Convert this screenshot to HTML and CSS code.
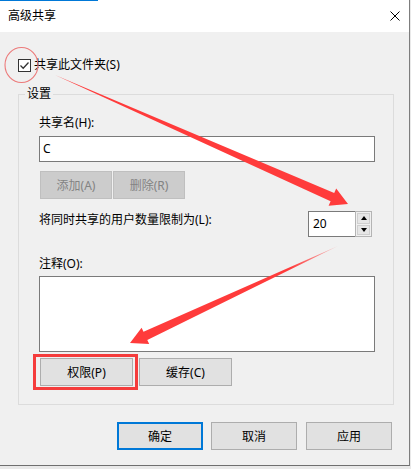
FILE: index.html
```html
<!DOCTYPE html>
<html lang="zh-CN">
<head>
    <meta charset="UTF-8">
    <meta name="viewport" content="width=device-width, initial-scale=1.0">
    <title>高级共享</title>
    <link rel="stylesheet" href="styles.css">
</head>
<body>

<div class="window">
    <div class="titlebar">
        <span class="title">高级共享</span>
        <svg class="close" width="10" height="10" viewBox="0 0 10 10">
            <path d="M0.5 0.5 L9.5 9.5 M9.5 0.5 L0.5 9.5" stroke="#000" stroke-width="1" fill="none"/>
        </svg>
    </div>

    <div class="content">
        <!-- Share checkbox -->
        <label class="share-check">
            <span class="checkbox">
                <svg width="11" height="11" viewBox="0 0 11 11">
                    <path d="M1.5 5.5 L4.2 8.2 L9.5 2.5" stroke="#333" stroke-width="1.3" fill="none"/>
                </svg>
            </span>
            共享此文件夹(S)
        </label>

        <!-- Settings group -->
        <div class="group">
            <span class="group-title">设置</span>

            <div class="field-label">共享名(H):</div>
            <div class="textbox">C</div>

            <div class="btn-row small">
                <button class="btn" disabled>添加(A)</button>
                <button class="btn" disabled>删除(R)</button>
            </div>

            <div class="limit-row">
                <span class="limit-label">将同时共享的用户数量限制为(L):</span>
                <div class="spinner">
                    <span class="spin-value">20</span>
                    <span class="spin-btns">
                        <span class="spin-btn"><i class="tri-up"></i></span>
                        <span class="spin-btn"><i class="tri-down"></i></span>
                    </span>
                </div>
            </div>

            <div class="field-label comment">注释(O):</div>
            <div class="textarea"></div>

            <div class="btn-row wide">
                <button class="btn">权限(P)</button>
                <button class="btn">缓存(C)</button>
            </div>
        </div>

        <!-- Dialog buttons -->
        <div class="dialog-buttons">
            <button class="btn default">确定</button>
            <button class="btn">取消</button>
            <button class="btn">应用</button>
        </div>
    </div>
</div>

<!-- Red annotations drawn over the dialog -->
<svg class="annotations" width="411" height="469" viewBox="0 0 411 469">
    <defs>
        <linearGradient id="fade" gradientUnits="userSpaceOnUse" x1="338" y1="246" x2="290" y2="268">
            <stop offset="0" stop-color="#ff3b3b" stop-opacity="0.25"/>
            <stop offset="1" stop-color="#ff3b3b" stop-opacity="1"/>
        </linearGradient>
    </defs>
    <ellipse cx="21.5" cy="65" rx="16.5" ry="17.5" fill="none" stroke="#ec7a7a" stroke-width="1.1"/>
    <polygon fill="#ff3b3b" points="55,75 334.2,193 336.2,188.4 348,204 328.6,205.8 330.6,201.2"/>
    <polygon fill="url(#fade)" points="338,246 143.5,331.7 141.6,327.7 130,343 149.2,343.9 147.3,339.9"/>
    <rect x="34.5" y="355.5" width="102" height="33" fill="none" stroke="#f53c3c" stroke-width="3"/>
</svg>

</body>
</html>
```

FILE: styles.css
```css
body {
    margin: 0;
    background: #e9e9e9;
    font-family: "Noto Sans", "Noto Sans CJK SC", sans-serif;
    font-size: 12px;
    color: #000;
    position: relative;
    width: 411px;
    height: 469px;
    overflow: hidden;
}
.window {
    box-sizing: border-box;
    width: 410px;
    height: 466px;
    background: #f0f0f0;
    border-right: 1px solid #7d7d7d;
    border-bottom: 1px solid #6f6f6f;
}
.titlebar {
    height: 32px;
    display: flex;
    align-items: center;
    justify-content: space-between;
    padding-left: 8px;
    background: linear-gradient(#0078d7, #0078d7) no-repeat 0 0 / 98px 1px, #fff;
}
.title {
    line-height: 16px;
}
.close {
    margin-right: 9px;
}
.content {
    padding: 0 15px 0 18px;
}
.share-check {
    display: flex;
    align-items: center;
    height: 20px;
    margin-top: 23px;
    line-height: 16px;
}
.checkbox {
    box-sizing: border-box;
    width: 13px;
    height: 13px;
    border: 1px solid #333;
    background: #fff;
    margin-right: 3px;
    display: flex;
}
.group {
    box-sizing: border-box;
    width: 376px;
    margin-top: 19px;
    border: 1px solid #dcdcdc;
    padding: 0 18px 18px 20px;
}
.group-title {
    display: block;
    width: fit-content;
    margin: -9px 0 0 -14px;
    padding: 0 2px;
    line-height: 16px;
    background: #f0f0f0;
}
.field-label {
    line-height: 16px;
    margin-top: 13px;
}
.field-label.comment {
    margin-top: 19px;
}
.textbox {
    box-sizing: border-box;
    height: 26px;
    margin-top: 5px;
    border: 1px solid #7a7a7a;
    background: #fff;
    padding-left: 3px;
    line-height: 24px;
}
.textarea {
    box-sizing: border-box;
    height: 76px;
    margin-top: 4px;
    border: 1px solid #7a7a7a;
    background: #fff;
}
.btn {
    box-sizing: border-box;
    height: 28px;
    margin: 0;
    padding: 0;
    font: inherit;
    color: #000;
    background: #e1e1e1;
    border: 1px solid #adadad;
}
.btn:disabled {
    background: #cccccc;
    border-color: #bfbfbf;
    color: #838383;
}
.btn-row {
    display: flex;
    margin-left: 1px;
}
.btn-row.small {
    margin-top: 9px;
    gap: 1px;
}
.btn-row.small .btn {
    width: 72px;
}
.btn-row.wide {
    margin-top: 6px;
    gap: 6px;
}
.btn-row.wide .btn {
    width: 93px;
}
.limit-row {
    display: flex;
    justify-content: space-between;
    align-items: flex-start;
    margin-top: 12px;
    padding-right: 3px;
}
.limit-label {
    padding-top: 1px;
    line-height: 16px;
}
.spinner {
    display: flex;
    height: 26px;
}
.spin-value {
    box-sizing: border-box;
    width: 47px;
    height: 26px;
    border: 1px solid #7a7a7a;
    border-right: none;
    background: #fff;
    padding-left: 4px;
    line-height: 24px;
}
.spin-btns {
    box-sizing: border-box;
    width: 17px;
    height: 26px;
    border: 1px solid #b4b4b4;
    background: #f0f0f0;
    display: flex;
    flex-direction: column;
    padding: 1px;
    gap: 1px;
}
.spin-btn {
    flex: 1;
    background: #e6e6e6;
    border: 1px solid #cfcfcf;
    display: flex;
    align-items: center;
    justify-content: center;
}
.tri-up {
    width: 0;
    height: 0;
    border-left: 3.5px solid transparent;
    border-right: 3.5px solid transparent;
    border-bottom: 4px solid #000;
}
.tri-down {
    width: 0;
    height: 0;
    border-left: 3.5px solid transparent;
    border-right: 3.5px solid transparent;
    border-top: 4px solid #000;
}
.dialog-buttons {
    display: flex;
    justify-content: flex-end;
    margin-top: 17px;
    padding-right: 2px;
}
.dialog-buttons .btn {
    width: 86px;
    margin-left: 8px;
}
.dialog-buttons .btn:last-child {
    margin-left: 9px;
}
.btn.default {
    border: 2px solid #0078d7;
}
.annotations {
    position: absolute;
    left: 0;
    top: 0;
    pointer-events: none;
}
```
